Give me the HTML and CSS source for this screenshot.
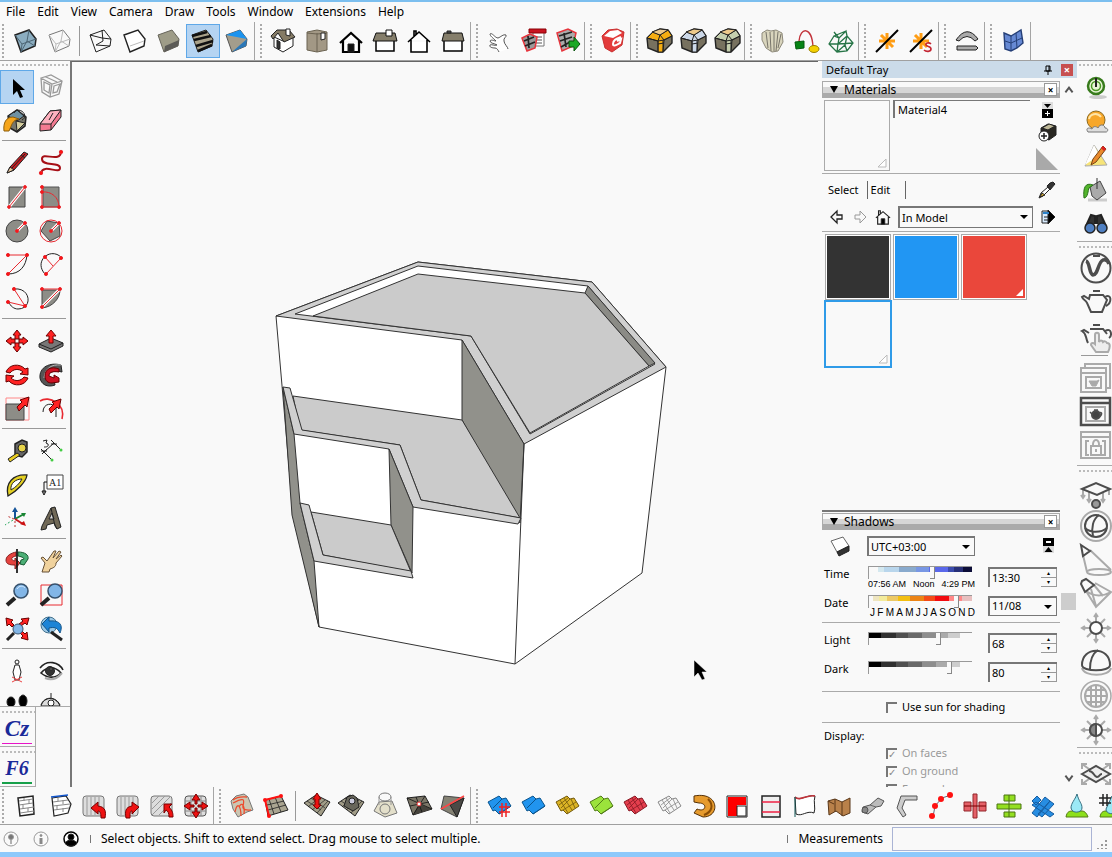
FILE: index.html
```html
<!DOCTYPE html>
<html lang="en">
<head>
<meta charset="utf-8">
<title>Model editor</title>
<link rel="stylesheet" href="styles.css">
</head>
<body>
<svg class="defs" aria-hidden="true">
  <symbol id="sheet" viewBox="0 0 34 34"><path d="M6 13l11-6 3 3 4-1 5 8-12 8-4-4-2 1z"/><path class="shade" d="M11 19l9-9M17 25l12-8"/></symbol>
  <symbol id="gridsheet" viewBox="0 0 34 34"><path d="M6 13l11-6 3 3 4-1 5 8-12 8-4-4-2 1z"/><path class="shade" d="M11 19l9-9M9 16l9-7M13 21l13-8M10 11l8 13M14 9l8 12M21 10l4 9" stroke-width=".8"/></symbol>
  <symbol id="sandmesh" viewBox="0 0 34 34"><path d="M4 14L16 6l14 7-9 14z" fill="#a29d88"/><path d="M7 12l14 9M11 9l14 10M8 18L20 8M12 21l13-10M17 24l11-12" fill="none" stroke-width=".7"/></symbol>
  <symbol id="round" viewBox="0 0 34 34"><path d="M5 14L11 8l7-3 8 1 4 6v7l-9 9-5 0-10-4z" fill="#77715f" stroke-width="1.4"/><path class="tone" d="M5 14l6-6 7 3 8-5 4 6-8 4-1 12h-5V17z"/><path d="M10 8l8-3 8 1-8 5z" fill="#ecc98b"/><path d="M5 14l11 3 6-1 8-4M16 17v11M21 16v12M18 11l-2 6M18 11l4 5M16 20l6-1" fill="none"/></symbol>
</svg>

<nav class="menu" aria-label="Main menu">
  <a href="#file">File</a><a href="#edit">Edit</a><a href="#view">View</a><a href="#camera">Camera</a><a href="#draw">Draw</a><a href="#tools">Tools</a><a href="#window">Window</a><a href="#extensions">Extensions</a><a href="#help">Help</a>
</nav>

<header class="strip top">
  <div class="group first">
    <button aria-label="X-ray"><svg viewBox="0 0 34 34"><path d="M6 11l14-5 7 9-1 7-14 6z" fill="#8badc0" stroke-width="1.5"/><path d="M6 11l7 9 14-5M13 20l-1 8M20 6l-2 11-6 11M18 17l8 5" stroke="#4d6675"/></svg></button>
    <button aria-label="Back edges"><svg viewBox="0 0 34 34" stroke="#777"><path d="M6 11l14-5 7 9-1 7-14 6z"/><path d="M6 11l7 9 14-5M13 20l-1 8M20 6l-2 11-6 11M18 17l8 5" stroke="#bbb"/></svg></button>
    <i class="sep"></i>
    <button aria-label="Wireframe"><svg viewBox="0 0 34 34"><path d="M6 11l14-5 7 9-1 7-14 6zM18 6l1 11-7 4M6 11l12 3 9 1M12 21l14 1"/></svg></button>
    <button aria-label="Hidden line"><svg viewBox="0 0 34 34"><path d="M6 11l14-5 7 9-1 7-14 6z" fill="#fff" stroke-width="1.4"/><path d="M12 22l14-5" stroke="#bbb"/></svg></button>
    <button aria-label="Shaded"><svg viewBox="0 0 34 34"><path d="M6 11l14-5 7 9-1 7-14 6z" fill="#9e9c88" stroke="#66645a"/><path d="M13 22l14-6-1 6-14 6z" fill="#5c5b57" stroke="none"/></svg></button>
    <button class="on" aria-label="Shaded with textures"><svg viewBox="0 0 34 34"><path d="M6 11l14-5 7 9-1 7-14 6z" fill="#aaa28a"/><path d="M6 12l15-4M8 16l17-4M10 22l17-5M12 27l14-6" stroke="#111" stroke-width="2.600"/></svg></button>
    <button aria-label="Monochrome"><svg viewBox="0 0 34 34"><path d="M6 11l14-5 7 9-1 7-14 6z" fill="#a39d8c" stroke="#555"/><path d="M6 11l14-5 7 9z" fill="#1b93ee" stroke="none"/><path d="M12 28l8-7 7-6-1 7z" fill="#2b78b8" stroke="none"/></svg></button>
  </div>
  <div class="group">
    <button aria-label="Iso view"><svg viewBox="0 0 34 34"><path d="M8 13v10l9 5 10-6v-9l-10 4z" fill="#fff"/><path d="M5 12l6-6h12l6 7-11 5-6-9-5 6z" fill="#857b65"/><path d="M20 5h4v7l-4-1z" fill="#fff"/><path d="M11 16v8l3 1v-7z" fill="#333"/></svg></button>
    <button aria-label="Top view"><svg viewBox="0 0 34 34"><path d="M7 8l10-2 10 2v18l-10 2-10-2z" fill="#a29885" stroke="#6b6352"/><path d="M17 9v19M7 9l10 1 10-1" stroke="#6b6352"/><path d="M21 9h4v6l-4 1z" fill="#fff"/></svg></button>
    <button aria-label="Front view"><svg viewBox="0 0 34 34"><path d="M6 19L17 9l11 10M9 17v11h16V17" fill="#fff" stroke="#000" stroke-width="2.200"/><path d="M14 20h6v8h-6z" fill="#111"/></svg></button>
    <button aria-label="Right view"><svg viewBox="0 0 34 34"><path d="M8 16h18v11H8z" fill="#fff" stroke="#000" stroke-width="1.500"/><path d="M8 9h19l2 8H5z" fill="#857e6b" stroke="#111"/><path d="M18 6h6v6h-6z" fill="#fff" stroke="#111"/></svg></button>
    <button aria-label="Back view"><svg viewBox="0 0 34 34"><path d="M6 18L17 8l11 10M9 16v12h16V16M12 12V7h2v4" stroke="#000" stroke-width="1.600" fill="#fff"/></svg></button>
    <button aria-label="Left view"><svg viewBox="0 0 34 34"><path d="M8 16h18v11H8z" fill="#fff" stroke="#000" stroke-width="1.500"/><path d="M8 9h18l2 8H6z" fill="#857e6b" stroke="#111"/><path d="M11 7h4v2h-4z" fill="#555"/></svg></button>
  </div>
  <div class="group">
    <button aria-label="Interact"><svg viewBox="0 0 34 34"><path d="M17 28c-1-2-2-4-4-4-3 0-6-1-5-3 2-1 4 1 7 0-3-2-6-1-7-4 1-2 4 0 6 0-3-3-6-5-6-7 2-2 5 4 8 4 3-1 5-4 8-3 1 2-3 3-2 6 0 3 4 6 4 8" stroke="#555" fill="#fff"/></svg></button>
    <button aria-label="Component options"><svg viewBox="0 0 34 34"><path d="M17 8h11v14H17z" fill="#fff" stroke="#777"/><path d="M13 5h17v4H13z" fill="#c81420" stroke="#8b0007"/><path d="M20 13h6M20 16h6M20 19h6" stroke="#555"/><path d="M6 14l8-4 7 3-2 11-8 3z" fill="#999" stroke="#e6343c" stroke-width="1.500"/><path d="M8 17l10-4M9 22l10-4M12 12l1 12" stroke="#222" stroke-width="1.700"/></svg></button>
    <button aria-label="Component attributes"><svg viewBox="0 0 34 34"><path d="M7 9l11-4 8 4-3 13-11 5z" fill="#aaa" stroke="#e6343c" stroke-width="1.500"/><path d="M9 12l13-4M10 17l12-4M11 23l9-5M14 9l2 14" stroke="#222" stroke-width="1.700"/><path d="M19 17h5v-4l6 7-6 7v-4h-5z" fill="#1ba925" stroke="#08540d"/></svg></button>
  </div>
  <div class="group">
    <button aria-label="Extension warehouse"><svg viewBox="0 0 34 34"><path d="M6 12l6-6 9-1 7 3-2 13-10 7-7-4z" fill="#e33b3b" stroke="#c83030"/><path d="M8 12l6-5 8-1 4 3-9 5z" fill="#fff" stroke="none"/><path d="M25 13c-5 2-8 3-8 7 0 3 3 1 7-1l1-4-4 2" stroke="#fff" stroke-width="2"/></svg></button>
  </div>
  <div class="group">
    <button class="gold" aria-label="Round corner"><svg><use href="#round"/></svg></button>
    <button class="ice" aria-label="Sharp corner"><svg><use href="#round"/></svg></button>
    <button class="sage" aria-label="Bevel"><svg><use href="#round"/></svg></button>
  </div>
  <div class="group">
    <button aria-label="Curviloft"><svg viewBox="0 0 34 34"><path d="M6 9l5-3 4 1 5-1 6 3 1 9-5 9-6 1-6-4-4-8z" fill="#d9d5bd" stroke="#8d897a"/><path d="M10 8l2 16M14 8l1 19M18 7v20M22 8l-2 19M25 10l-3 14" stroke="#77746a"/></svg></button>
    <button aria-label="Loft path"><svg viewBox="0 0 34 34"><path d="M9 17C10 3 22 2 23 23" stroke="#c2343b" stroke-width="1.400"/><path d="M5 18l9-1v7l-8 1z" fill="#078415" stroke="#045b0d"/><ellipse cx="24" cy="25" rx="5" ry="3.500" fill="#f3cf00" stroke="#987f00"/></svg></button>
    <button aria-label="Skinning"><svg viewBox="0 0 34 34" stroke="#277547"><path d="M5 20l5-8 5 2 7-7 1 5 6 7-6 8-10 1zM5 20l9 0 15-1M15 14l-1 6 9-8M10 12l12-5M14 20l-1 8M23 12l-2 9 2 6M13 28l8-7M10 8l5 6" stroke-width="1.300"/></svg></button>
  </div>
  <div class="group">
    <button aria-label="Weld edges"><svg viewBox="0 0 34 34"><path d="M9 17h16M17 9v16M11 11l12 12" stroke="#ff9d14" stroke-width="3"/><path d="M6 28L28 6" stroke="#000" stroke-width="2"/></svg></button>
    <button aria-label="Weld settings"><svg viewBox="0 0 34 34"><path d="M9 17h16M17 9v16M11 11l12 12" stroke="#ff9d14" stroke-width="3"/><path d="M6 28L28 6" stroke="#000" stroke-width="2"/><path d="M27 20c-2-2-6-1-5 1s5 1 5 4-5 3-7 1" stroke="#c42532" stroke-width="1.600"/></svg></button>
  </div>
  <div class="group">
    <button aria-label="Shape bender"><svg viewBox="0 0 34 34"><path d="M6 16Q17 0 28 15l-3 2Q17 8 9 17z" fill="#aaa"/><path d="M7 22h19l2 2-2 2H7z" fill="#aaa"/></svg></button>
  </div>
  <div class="group">
    <button aria-label="Unwrap"><svg viewBox="0 0 34 34"><path d="M8 9l7 3 10-6 2 13-6 5-6 3-6-2z" fill="#6689d3" stroke="#253f77" stroke-width="1.400"/><path d="M15 12v15M9 17l6 2 11-5M20 9l1 15" stroke="#253f77"/></svg></button>
  </div>
</header>

<main class="work">
  <aside class="left">
    <div class="dots"></div>
    <div class="palette">
      <div class="pair">
        <button class="on" aria-label="Select"><svg viewBox="0 0 34 34"><path d="M13 9v16l4-4 3 7 3-1-3-7h5z" fill="#000" stroke="none"/></svg></button>
        <button aria-label="Make component"><svg viewBox="0 0 34 34" stroke="#999"><path d="M7 8l10-3 11 6-3 13-9 3-8-5zM7 8l11 6 10-3M18 14l-2 13M10 12l6 3-1 8-5-3zM20 16l6-2-3 8-4 1zM12 7l11 5" stroke-width="1.300"/></svg></button>
        <button aria-label="Paint bucket"><svg viewBox="0 0 34 34"><path d="M8 12l9-6 9 7-1 9-8 6-7-4z" fill="#77776c" stroke-width="1.500"/><path d="M8 12l9-6 7 6-7 5z" fill="#6e91a2"/><path d="M16 17l9 2-8 8z" fill="#d4cd9e"/><path d="M4 27c-1-8 2-14 9-14l6 2c-7 1-7 6-10 12z" fill="#f5a51b" stroke="#8c5d0b"/><path d="M14 9c5-8 16 3 8 7"/></svg></button>
        <button aria-label="Eraser"><svg viewBox="0 0 34 34"><path d="M6 20l10-13 11-1v7L17 26 6 27z" fill="#f47a91"/><path d="M6 20l10-13 11-1-10 14z" fill="#ffb1bf"/><path d="M17 20v6M15 16l4-7"/></svg></button>
      </div><i class="rule"></i>
      <div class="pair">
        <button aria-label="Line"><svg viewBox="0 0 34 34"><path d="M7 27l3-6L24 6l4 2-14 16z" fill="#c51e23"/><path d="M7 27l3-6 4 3z" fill="#eac79a"/><path d="M21 9l4 3M12 22L25 8" /></svg></button>
        <button class="red" aria-label="Freehand"><svg viewBox="0 0 34 34"><path d="M7 27c2-10 19 2 19-5S8 21 8 13s19 5 19-8" stroke="#a60f16" stroke-width="2"/><circle cx="7" cy="27" r="1.700"/><circle cx="27" cy="6" r="1.700"/></svg></button>
        <button class="red" aria-label="Rectangle"><svg viewBox="0 0 34 34"><path d="M9 7h16v20H9z" fill="#8d8d87" stroke="#444"/><path d="M9 27L25 7" stroke="#fff" stroke-width="3"/><path d="M9 27L25 7"/><circle cx="9" cy="27" r="1.400"/><circle cx="25" cy="7" r="1.400"/></svg></button>
        <button class="red" aria-label="Rotated rectangle"><svg viewBox="0 0 34 34"><path d="M9 7h16v20H9z" fill="#8d8d87" stroke="#555"/><path d="M8 7v20h18M8 12c9-1 17 5 17 15"/><circle cx="8" cy="7" r="1.500"/><circle cx="8" cy="12" r="1.500"/><circle cx="8" cy="27" r="1.500"/><circle cx="25" cy="27" r="1.500"/></svg></button>
        <button class="red" aria-label="Circle"><svg viewBox="0 0 34 34"><circle cx="17" cy="17" r="11" class="grey"/><path d="M17 17l8-8" stroke="#fff" stroke-width="3"/><path d="M17 17l8-8"/><circle cx="17" cy="17" r="1.500"/><circle cx="25" cy="9" r="1.500"/></svg></button>
        <button class="red" aria-label="Polygon"><svg viewBox="0 0 34 34"><path d="M13 7l12 2 1 13-10 5-9-10z" class="grey"/><circle cx="17" cy="17" r="11" class="ring"/><path d="M17 17l8-8" stroke="#fff" stroke-width="3"/><path d="M17 17l8-8"/><circle cx="17" cy="17" r="1.500"/><circle cx="25" cy="9" r="1.500"/></svg></button>
        <button class="red" aria-label="Arc"><svg viewBox="0 0 34 34"><path d="M8 26c12 0 18-8 19-19" stroke="#222"/><path d="M8 26L27 7H8"/><circle cx="8" cy="7" r="1.600"/><circle cx="27" cy="7" r="1.600"/><circle cx="8" cy="26" r="1.600"/></svg></button>
        <button class="red" aria-label="Two point arc"><svg viewBox="0 0 34 34"><path d="M11 26C-1 13 17-2 28 10" stroke="#222"/><path d="M12 26l15-16M11 9l8 9"/><circle cx="11" cy="9" r="1.600"/><circle cx="27" cy="10" r="1.600"/><circle cx="12" cy="26" r="1.600"/></svg></button>
        <button class="red" aria-label="Three point arc"><svg viewBox="0 0 34 34"><path d="M14 7c17-2 19 20 4 20-4 0-8-3-9-7" stroke="#222"/><path d="M14 7l11 17-17-4"/><circle cx="14" cy="7" r="1.600"/><circle cx="8" cy="20" r="1.600"/><circle cx="25" cy="24" r="1.600"/></svg></button>
        <button class="red" aria-label="Pie"><svg viewBox="0 0 34 34"><path d="M8 8h18c0 8-7 17-18 18z" class="grey"/><path d="M8 25L26 7" stroke="#fff" stroke-width="3"/><path d="M8 25L26 7H8"/><circle cx="8" cy="7" r="1.500"/><circle cx="8" cy="25" r="1.500"/><circle cx="26" cy="7" r="1.500"/></svg></button>
      </div><i class="rule"></i>
      <div class="pair">
        <button aria-label="Move"><svg viewBox="0 0 34 34"><path d="M17 6l4 5h-2v4h-4v-4h-2zM17 28l4-5h-2v-4h-4v4h-2zM6 17l5-4v2h4v4h-4v2zM28 17l-5-4v2h-4v4h4v2z" fill="#f22" stroke="#600"/></svg></button>
        <button aria-label="Push pull"><svg viewBox="0 0 34 34"><path d="M5 20l12-6 12 5v3l-12 6-12-5z" fill="#777"/><path d="M5 20l12 5 12-6" /><path d="M17 6l5 6h-3v7h-4v-7h-3z" fill="#f22" stroke="#700"/></svg></button>
        <button aria-label="Rotate"><svg viewBox="0 0 34 34"><path d="M6 14C9 6 20 5 25 11l3-1v7l-8-1 3-2c-4-4-10-3-13 1zM28 20c-3 8-14 9-19 3l-3 1v-7l8 1-3 2c4 4 10 3 13-1z" fill="#f22" stroke="#600"/></svg></button>
        <button aria-label="Follow me"><svg viewBox="0 0 34 34"><path d="M6 20C5 9 16 4 27 7l1 7c-8-2-14 0-14 5 0 2 3 3 6 3l1 5c-8 3-14-1-15-7z" fill="#555"/><path d="M27 7c-9-1-16 3-17 13" stroke="#bbb"/><path d="M11 18c0-7 6-10 14-7v3c-6-1-10 0-10 4l5 2v-3l5 3v4l-7 1c-4 0-7-2-7-7z" fill="#c12" stroke="#600"/></svg></button>
        <button class="red" aria-label="Scale"><svg viewBox="0 0 34 34"><path d="M6 6h23v22H6z" class="thin"/><path d="M6 12h18v16H6z" class="grey"/><path d="M17 15l5-5-2-2 9-3-2 10-2-2-6 6z" fill="#f22" stroke="#600"/></svg></button>
        <button class="red" aria-label="Offset"><svg viewBox="0 0 34 34"><path d="M6 9c9-6 26 3 22 18" stroke-width="1.600"/><path d="M9 20c0-9 10-10 13-4v9" stroke="#222"/><path d="M15 17l5-5-2-2 9-3-2 10-2-2-6 6z" fill="#f22" stroke="#600"/></svg></button>
      </div><i class="rule"></i>
      <div class="pair">
        <button aria-label="Tape measure"><svg viewBox="0 0 34 34"><path d="M15 10l7-4 5 2v10l-5 5-7-2z" fill="#666" stroke-width="1.500"/><circle cx="22" cy="14" r="4" fill="#e7d44a"/><path d="M17 19L8 25l2 3 10-7z" fill="#e9cd22"/></svg></button>
        <button aria-label="Dimension"><svg viewBox="0 0 34 34"><path d="M10 18l10-9M7 15l11 11M17 6l10 10M7 17h6M8 20l5-5M17 10h6M18 7l5 5"/><path d="M9 7l4-1-1 3 2 1c1 3-2 3-4 3"/><circle cx="27" cy="16" r="1.500" fill="#4c4" stroke="none"/><circle cx="18" cy="26" r="1.500" fill="#4c4" stroke="none"/></svg></button>
        <button aria-label="Protractor"><svg viewBox="0 0 34 34"><path d="M8 28C5 15 13 6 27 7c-1 7-10 16-19 21z" fill="#e4d022" stroke-width="1.300"/><path d="M11 22c-1-7 5-11 11-11-2 4-6 8-11 11z" fill="#fff"/></svg></button>
        <button aria-label="Text"><svg viewBox="0 0 34 34"><path d="M13 7h16v14H13z" fill="#fff" stroke="#444"/><path d="M13 14h-3v11M8 23h4l-2 4z" fill="none" stroke="#111"/><text x="15" y="18">A1</text></svg></button>
        <button aria-label="Axes"><svg viewBox="0 0 34 34"><path d="M15 17V7" stroke="#14549a" stroke-width="2"/><path d="M12 10l3-5 3 5z" fill="#14549a" stroke="none"/><path d="M15 17l9-5" stroke="#198533" stroke-width="2"/><path d="M15 17l8 5" stroke="#c8171c" stroke-width="2"/><path d="M13 18l-8 5" stroke="#25a65a" stroke-dasharray="2"/><path d="M14 17l-7-3M15 19v8" stroke="#b33" stroke-dasharray="2"/><path d="M20 22l6 2-2-5z" fill="#c11" stroke="none"/><path d="M21 11h5l-2 4z" fill="#198533" stroke="none"/></svg></button>
        <button aria-label="3D text"><svg viewBox="0 0 34 34"><path d="M8 24l9-18 4-1 6 20-4 2-3-6-7 2-1 4-5 1z" fill="#716957"/><path d="M15 17l3-6 2 6z" fill="#ddd"/><path d="M17 6l4 18 2 3"/></svg></button>
      </div><i class="rule"></i>
      <div class="pair">
        <button aria-label="Orbit"><svg viewBox="0 0 34 34"><path d="M6 16c0-6 10-8 10-8v4c-5 1-6 4-1 5v-3l5 5-5 6v-4C9 21 6 20 6 16z" fill="#e6433e" stroke="#822"/><path d="M18 8c7 0 11 3 10 7l-4 6-4-1 1-4 3-1c0-2-6-3-6-3z" fill="#4caf76" stroke="#175b32"/><path d="M17 5v24" stroke="#111" stroke-width="1.700"/></svg></button>
        <button aria-label="Pan"><svg viewBox="0 0 34 34"><path d="M8 28l3-9-4-5 2-1 4 4L20 7l2 0-3 7 6-7 2 1-5 7 5-4 1 1-6 7c0 4-3 5-6 6l-1 3z" fill="#f0d29d" stroke="#665137"/></svg></button>
        <button aria-label="Zoom"><svg viewBox="0 0 34 34"><path d="M7 27l8-7" stroke-width="4"/><circle cx="21" cy="13" r="7" fill="#82b6e7" stroke="#37526d" stroke-width="1.600"/><path d="M17 11c2-4 7-3 8-1" stroke="#d6ebfd"/></svg></button>
        <button class="red" aria-label="Zoom window"><svg viewBox="0 0 34 34"><path d="M7 7h21v20H7z"/><path d="M7 27l8-7" stroke="#222" stroke-width="4"/><circle cx="21" cy="13" r="7" class="lens"/></svg></button>
        <button aria-label="Zoom extents"><svg viewBox="0 0 34 34"><path d="M6 6l7 2-2 2 3 3-2 2-3-3-2 2zM29 6l-2 7-2-2-4 3-2-2 4-3-2-2zM28 28l-7-2 2-2-4-4 2-2 4 4 2-2z" fill="#f22" stroke="#600"/><path d="M7 28l7-7" stroke-width="3"/><circle cx="18" cy="17" r="5" fill="#82b6e7" stroke="#37526d"/></svg></button>
        <button aria-label="Previous view"><svg viewBox="0 0 34 34"><circle cx="15" cy="13" r="8" fill="#9bc8e5" stroke="#44718d"/><path d="M8 12l7-7v4c12-1 14 5 11 12-3-6-6-6-11-5v4z" fill="#1d84d6" stroke="#135388"/><path d="M17 20l11 8" stroke-width="3"/></svg></button>
      </div><i class="rule"></i>
      <div class="pair">
        <button aria-label="Position camera"><svg viewBox="0 0 34 34"><circle cx="17" cy="8" r="2"/><path d="M15 11h4l2 7-2 8h-4l-2-8z" fill="#fff"/><path d="M12 28l10-5M12 23l10 5" stroke="#e44"/></svg></button>
        <button aria-label="Look around"><svg viewBox="0 0 34 34"><path d="M6 14c7-9 19-6 23 2M7 19c6-7 14-7 20 0-6 6-14 5-20 0z" stroke-width="1.600"/><circle cx="16" cy="17" r="4.500" fill="#333"/><circle cx="17" cy="15" r="1" fill="#fff"/><path d="M11 24c7 3 12 1 17-5" stroke="#aaa" stroke-width="2"/></svg></button>
        <button aria-label="Walk"><svg viewBox="0 0 34 34"><ellipse cx="11" cy="14" rx="4" ry="5" fill="#000"/><ellipse cx="23" cy="13" rx="4" ry="6" fill="#000"/></svg></button>
        <button aria-label="Section plane"><svg viewBox="0 0 34 34"><path d="M7 18c3-10 15-10 19 0z" fill="#ddd"/><path d="M17 5v5M7 17c3-9 15-9 19 0"/><circle cx="17" cy="15" r="3" fill="#fff"/></svg></button>
      </div>
    </div>
    <div class="plugin"><div class="dots"></div><button class="script pink" aria-label="Curvizard">Cz</button></div>
    <div class="plugin"><div class="dots"></div><button class="script green" aria-label="Fredo6">F6</button></div>
  </aside>

  <section class="view" aria-label="Model view">
    <svg viewBox="72 62 746 724" preserveAspectRatio="xMinYMin meet" stroke="#333" stroke-linejoin="round">
      <path fill="#fff" d="M276 316L418 262 592 282 666 367 642 573 515 664 319 627 293 513z"/>
      <path fill="#d0d0d0" d="M276 316L418 262 592 282 666 367 524 444 462 340z"/>
      <path fill="#fff" d="M295 314L418 266 588 286 655 364 530 434 471 336z"/>
      <path fill="#8b8b86" d="M585 293L588 286 655 363 649 366z"/>
      <path fill="#cbcbcb" d="M313 316L418 274 585 293 649 366 530 433 471 336z"/>
      <path fill="#91918b" d="M462 340L524 444 520 523 462 420z"/>
      <path fill="#cbcbcb" d="M293 396L462 420 520 518 421 500 400 445 300 430z"/>
      <path fill="#91918b" d="M283 387L294 434 300 503 314 561 319 627 292 515z"/>
      <path fill="#d0d0d0" d="M283 387L290 388 302 430 400 445 421 500 521 518 518 524 413 507 389 449 294 434z"/>
      <path fill="#91918b" d="M389 449L413 507 412 573 391 525z"/>
      <path fill="#cbcbcb" d="M311 512L391 525 411 572 323 555z"/>
      <path fill="#d0d0d0" d="M300 503L309 505 323 555 411 571 413 578 314 561z"/>
      <path d="M524 444L515 664"/>
      <path fill="#000" stroke="#fff" stroke-width=".5" d="M694 660v17l4-4 4 7 3-1-3-7h5z"/>
    </svg>
  </section>

  <aside class="tray">
    <h1>Default Tray <button class="pin" aria-label="Pin"><svg viewBox="0 0 10 10"><path d="M3 1h4v5H3zM1 6h8M5 6v4M6 1v5" stroke="#000"/></svg></button><button class="shut" aria-label="Close tray">×</button></h1>
    <div class="traybody">
      <div class="panels">
        <section class="materials">
          <h2><span class="tri"></span>Materials<button aria-label="Close materials">×</button></h2>
          <div class="info">
            <div class="preview"><svg class="corner" viewBox="0 0 10 10"><path d="M9 1v8H1z" fill="#fff" stroke="#bbb"/></svg></div>
            <input class="name" aria-label="Material name" value="Material4">
            <div class="tools">
              <button aria-label="Show secondary pane"><svg viewBox="0 0 12 16"><path d="M1 0h11v7H1z" fill="#ddd" stroke="none"/><path d="M3 2h7L6.500 6zM1 7h11v9H1z" fill="#000" stroke="none"/><path d="M4 11.500h5M6.500 9v5" stroke="#fff"/></svg></button>
              <button aria-label="Create material"><svg viewBox="0 0 20 20"><path d="M4 6l7-4 8 2v9l-7 5-8-3z" fill="#292722"/><path d="M5 6l7-4 6 2-7 4z" fill="#bdb797"/><circle cx="7" cy="14" r="5" fill="#fff"/><path d="M4 14h6M7 11v6" stroke-width="1.500"/></svg></button>
              <svg class="wedge" viewBox="0 0 22 22"><path d="M0 0v22h22z" fill="#a9a9a9" stroke="none"/></svg>
            </div>
          </div>
          <div class="tabs">
            <a href="#select" class="active">Select</a><a href="#edit-tab">Edit</a>
            <button aria-label="Sample paint"><svg viewBox="0 0 18 18"><path d="M1 17l2-5 7-6 2 2-7 7z" fill="#fff"/><path d="M2 16l2-4 3 2z" fill="#e5b52f"/><path d="M9 5l3 4 5-6-2-2-3 1z" fill="#333"/></svg></button>
          </div>
          <div class="pick">
            <button aria-label="Back"><svg viewBox="0 0 16 16"><path d="M2 8l6-6v4h5v4H8v4z" stroke-width="1.300"/></svg></button>
            <button aria-label="Forward"><svg viewBox="0 0 16 16"><path d="M14 8L8 2v4H3v4h5v4z" stroke="#999"/></svg></button>
            <button aria-label="In model"><svg viewBox="0 0 18 18"><path d="M1 10l8-7 8 7M3 9v8h12V9M4 7V2h2v3" stroke-width="1.300"/><path d="M7 11h4v6H7z" fill="#000"/></svg></button>
            <span class="drop"><select aria-label="Library"><option>In Model</option></select></span>
            <button aria-label="Details"><svg viewBox="0 0 16 16"><path d="M2 2h7v12H2z" fill="#d9ecff"/><path d="M8 1l7 7-7 7z" fill="#000"/><path d="M3 4h6" stroke="#2c82c9" stroke-width="2"/><path d="M4 8h4M4 11h4"/></svg></button>
          </div>
          <div class="swatches">
            <button class="coal" aria-label="Material1"></button><button class="blue" aria-label="Material2"></button><button class="rouge" aria-label="Material3"><svg class="corner" viewBox="0 0 10 10"><path d="M9 2v7H2z" fill="#fff" stroke="none"/></svg></button><button class="blank" aria-label="Material4"><svg class="corner" viewBox="0 0 10 10"><path d="M9 1v8H1z" fill="#fff" stroke="#bbb"/></svg></button>
          </div>
        </section>
        <section class="shadows">
          <h2><span class="tri"></span>Shadows<button aria-label="Close shadows">×</button></h2>
          <div class="zone">
            <button aria-label="Show shadows"><svg viewBox="0 0 22 22"><path d="M2 6l12-4 6 9-12 6z" fill="#fff" stroke="#666"/><path d="M8 17l12-6v5l-10 5z" fill="#333"/></svg></button>
            <span class="drop"><select aria-label="Time zone"><option>UTC+03:00</option></select></span>
            <button class="fold" aria-label="Hide details"><svg viewBox="0 0 12 16"><path d="M1 0h11v8H1z" fill="#000" stroke="none"/><path d="M4 3h5v2H4z" fill="#fff" stroke="none"/><path d="M1 8h11v7H1z" fill="#ddd" stroke="none"/><path d="M6.500 9l4 5h-8z" fill="#000" stroke="none"/></svg></button>
          </div>
          <div class="row"><label for="time">Time</label><div class="slide"><input id="time" class="hours" type="range" min="0" max="100" value="62"><div class="scale"><span>07:56 AM</span><span>Noon</span><span>4:29 PM</span></div></div><div class="spin"><input aria-label="Time value" value="13:30"><span><button aria-label="Later">▴</button><button aria-label="Earlier">▾</button></span></div></div>
          <div class="row"><label for="date">Date</label><div class="slide"><input id="date" class="months" type="range" min="0" max="100" value="87"><div class="scale"><span>J</span><span>F</span><span>M</span><span>A</span><span>M</span><span>J</span><span>J</span><span>A</span><span>S</span><span>O</span><span>N</span><span>D</span></div></div><span class="drop"><select aria-label="Date value"><option>11/08</option></select></span></div>
          <div class="block">
          <div class="row"><label for="light">Light</label><div class="slide"><input id="light" class="greys" type="range" min="0" max="100" value="68"></div><div class="spin"><input aria-label="Light value" value="68"><span><button aria-label="More light">▴</button><button aria-label="Less light">▾</button></span></div></div>
          <div class="row"><label for="dark">Dark</label><div class="slide"><input id="dark" class="greys" type="range" min="0" max="100" value="80"></div><div class="spin"><input aria-label="Dark value" value="80"><span><button aria-label="More dark">▴</button><button aria-label="Less dark">▾</button></span></div></div>
          </div>
          <label class="check sun"><input type="checkbox">Use sun for shading</label>
          <p>Display:</p>
          <label class="check"><input type="checkbox" checked disabled>On faces</label>
          <label class="check"><input type="checkbox" checked disabled>On ground</label>
          <label class="check"><input type="checkbox" disabled>From edges</label>
        </section>
      </div>
      <div class="scroll"><svg viewBox="0 0 10 10"><path d="M2 7l3-4 3 4" stroke="#555" stroke-width="1.600"/></svg><i></i><svg viewBox="0 0 10 10"><path d="M2 3l3 4 3-4" stroke="#555" stroke-width="1.600"/></svg></div>
    </div>
  </aside>

  <aside class="right">
    <div class="dots"></div>
    <div class="stack">
      <button aria-label="Enable"><svg viewBox="0 0 34 34"><ellipse cx="19" cy="26" rx="9" ry="2" fill="#ccc" stroke="none"/><circle cx="17" cy="15" r="8" fill="#e8f5d6" stroke="#387b1d" stroke-width="2.500"/><circle cx="17" cy="15" r="4.500" stroke="#4b9925" stroke-width="1.500"/><path d="M17 7v9" stroke="#222" stroke-width="2"/></svg></button>
      <button aria-label="Sky"><svg viewBox="0 0 34 34"><circle cx="17" cy="15" r="9" fill="#f7a72a" stroke="#8d6b20"/><path d="M10 14c1-5 8-7 12-2" stroke="#ffe5a6" stroke-width="2"/><path d="M9 27c-3-4 1-5 4-3 1-3 4-3 6-1 2-5 7-3 7 0 4 0 3 4 1 4z" fill="#ddd" stroke="#777"/></svg></button>
      <button aria-label="Edit scene"><svg viewBox="0 0 34 34"><path d="M6 27l9-21 13 20z" fill="#f7e478" stroke="#aaa"/><path d="M6 26l9-20 5 10z" fill="#fff" stroke="none"/><path d="M12 26l2-6L24 7l3 3-10 13z" fill="#e98a2c" stroke="#774315"/><path d="M23 8l3 3" stroke="#d22" stroke-width="3"/></svg></button>
      <button aria-label="Paint"><svg viewBox="0 0 34 34"><path d="M9 27h19" stroke="#ccc" stroke-width="3"/><path d="M11 14l10-6 6 12-9 7-5-4z" fill="#aaa" stroke="#444"/><path d="M18 5v11" stroke="#333"/><path d="M14 12c-8-3-10 3-9 13 4 0 4-8 5-10z" fill="#52b52b" stroke="#2a711a"/></svg></button>
      <button aria-label="Find"><svg viewBox="0 0 34 34"><path d="M7 19l5-11 4 1v8M27 19L22 8l-4 1v8" fill="#333" stroke="#222" stroke-width="2"/><circle cx="11" cy="21" r="5" fill="#4f7fc1" stroke="#222" stroke-width="1.500"/><circle cx="23" cy="21" r="5" fill="#4f7fc1" stroke="#222" stroke-width="1.500"/></svg></button>
    </div>
    <i class="wide"></i><div class="dots"></div>
    <div class="stack mono tall">
      <button aria-label="V-Ray"><svg viewBox="0 0 34 34"><circle cx="17" cy="17" r="14.500"/><path d="M7 10c4 1 3 13 7 14 5 0 5-13 10-15 3-1 5 1 6 4" stroke-width="3.500"/><path d="M14 5h7"/></svg></button>
      <button aria-label="Render"><svg viewBox="0 0 34 34"><path d="M11 10h13l4 5-5 12H12L8 18c-1-3-4-3-5-6l2-1 5 3zM14 6h7M26 12c7-4 7 6 1 9"/></svg></button>
      <button aria-label="Interactive render"><svg viewBox="0 0 34 34"><path d="M9 24c-3-6-1-9-6-12l2-1 5 3M11 10h13l4 5M14 6h7M26 12c7-4 7 5 4 7"/><path class="pale" d="M16 25V16c0-3 4-3 4 0v7c1-2 3-2 4 0 1-1 3-1 4 1 4 0 3 5 1 9H17l-5-7c0-3 3-2 4-1z" fill="#eee"/></svg></button>
      <i class="rule"></i>
      <button class="soft" aria-label="Batch render"><svg viewBox="0 0 34 34"><path d="M6 6V3h25v24h-3M2 7h25v24H2zM2 12h25M7 16h15v11H7z"/><path d="M10 20h8l2-1-3 6h-4z" fill="#aaa" stroke-width="1"/></svg></button>
      <button aria-label="Frame buffer"><svg viewBox="0 0 34 34"><path d="M2 3h29v27H2zM2 8h29" stroke-width="2.500"/><path class="pale" d="M7 12h19v14H7z"/><ellipse cx="17" cy="20" rx="4" ry="4" fill="#444"/><path d="M11 17l3 3M15 15h4M20 18c4-2 3 3 0 4" stroke-width="1.500"/></svg></button>
      <button class="soft" aria-label="Lock camera"><svg viewBox="0 0 34 34"><path d="M2 3h29v26H2zM2 8h29M10 12H7v14h3M23 12h3v14h-3M12 17h10v9H12zM14 17c-1-8 7-8 6 0M17 20v3"/></svg></button>
    </div>
    <i class="wide"></i><div class="dots"></div>
    <div class="stack mono">
      <button aria-label="Rectangle light"><svg viewBox="0 0 34 34"><path class="pale" d="M4 13v8M10 17v8M24 18v8M30 14v6M2 20l2 3 2-3M8 24l2 3 2-3M22 24l2 3 2-3"/><path d="M3 14l14-6 14 6-13 6z"/><circle cx="17" cy="29" r="4" fill="#999"/></svg></button>
      <button aria-label="Sphere light"><svg viewBox="0 0 34 34"><circle class="pale" cx="17" cy="17" r="15"/><circle cx="17" cy="17" r="11"/><path d="M20 6c-6 4-8 13-6 21M6 19c5 5 16 5 22 0"/></svg></button>
      <button aria-label="Spot light"><svg viewBox="0 0 34 34"><path class="pale" d="M4 12l4 17M11 7l21 20"/><ellipse class="pale" cx="20" cy="29" rx="12" ry="3"/><path d="M2 2l9 6-7 5z"/></svg></button>
      <button aria-label="IES light"><svg viewBox="0 0 34 34"><path class="pale" d="M7 14l10 16L32 15 16 6M7 14c7 5 16 6 25 1M12 12l5 17M15 8l9 11"/><path d="M3 4l4-2 8 6-9 7-4-8z"/></svg></button>
      <button aria-label="Omni light"><svg viewBox="0 0 34 34"><path class="pale" d="M17 4v26M4 17h26M8 8l18 18M26 8L8 26M15 6l2-3 2 3M15 28l2 3 2-3M6 15l-3 2 3 2M28 15l3 2-3 2"/><circle cx="17" cy="17" r="6" fill="#fff"/></svg></button>
      <button aria-label="Dome light"><svg viewBox="0 0 34 34"><path class="pale" d="M3 23c2 9 27 9 29 0"/><path d="M3 20c0-19 28-19 28 0 0 7-28 7-28 0zM19 5c-6 4-8 12-8 19" fill="none"/></svg></button>
      <button class="soft" aria-label="Mesh light"><svg viewBox="0 0 34 34"><circle cx="17" cy="17" r="15" stroke-width="1.500"/><circle cx="17" cy="17" r="11"/><path d="M17 6v22M6 17h22M8 11h18M8 23h18M12 7v20M22 7v20"/></svg></button>
      <button aria-label="Sun light"><svg viewBox="0 0 34 34"><path class="pale" d="M17 4v26M4 17h26M8 8l18 18M26 8L8 26M15 6l2-3 2 3M15 28l2 3 2-3M6 15l-3 2 3 2M28 15l3 2-3 2"/><circle cx="17" cy="17" r="6" fill="#fff"/><path d="M17 11v12c-8-1-8-11 0-12" fill="#888"/></svg></button>
    </div>
    <i class="wide"></i><div class="dots"></div>
    <div class="stack mono"><button aria-label="Infinite plane"><svg viewBox="0 0 34 34"><path class="pale" d="M3 7l28 20M31 7L3 27M3 12V7h5M26 7h5v5M3 22v5h5M26 27h5v-5"/><path d="M3 17l14-8 14 8-14 8z" fill="#eee"/><path d="M10 14c5 0 4 5 8 6 3 0 2-3 5-3" /></svg></button></div>
  </aside>
</main>

<div class="strip bottom">
  <div class="group first">
    <button aria-label="Texture quad"><svg viewBox="0 0 34 34"><path d="M9 9l15-2 1 18-14 2z" fill="#fff" stroke-width="1.500"/><path d="M10 12l14-2M10 16l14-2M11 20l14-2M11 24l14-2M15 9v3M20 11v4M14 16v4M19 19v4" stroke="#888"/></svg></button>
    <button aria-label="Texture edge"><svg viewBox="0 0 34 34"><path d="M9 9l14-2 5 8-3 9-14 3z" fill="#fff" stroke-width="1.200"/><path d="M10 13l15-2M10 17l17-2M11 21l15-2M15 9v3M20 11v4M14 17v4M20 19v4" stroke="#888"/><path d="M8 8l17-2" stroke="#15c" stroke-width="1.500"/></svg></button>
    <button aria-label="Rotate texture left"><svg viewBox="0 0 34 34"><rect x="6" y="7" width="21" height="20" rx="3" fill="#ddd" stroke="#777"/><path d="M10 8v18M14 8v18M18 8v18M22 8v18" stroke="#999"/><path d="M14 19l7-6v4c8 1 8 6 7 12h-4c0-5-1-7-3-7v3z" fill="#e11" stroke="#700"/></svg></button>
    <button aria-label="Rotate texture right"><svg viewBox="0 0 34 34"><rect x="6" y="7" width="21" height="20" rx="3" fill="#ddd" stroke="#777"/><path d="M10 8v18M14 8v18M18 8v18M22 8v18" stroke="#999"/><path d="M28 18l-7-5v4c-7 1-7 6-6 12h4c0-5 0-7 2-7v3z" fill="#e11" stroke="#700"/></svg></button>
    <button aria-label="Texture arrow"><svg viewBox="0 0 34 34"><rect x="6" y="7" width="21" height="20" rx="3" fill="#ddd" stroke="#777"/><path d="M7 14l7-7M7 20L20 7M7 26L26 7M14 26l12-12" stroke="#999"/><path d="M19 15h8l-3 3c4 4 4 7 4 10h-4c0-4-1-6-3-7l-2 3z" fill="#e11" stroke="#700"/></svg></button>
    <button aria-label="Scale texture"><svg viewBox="0 0 34 34"><rect x="6" y="7" width="21" height="20" rx="3" fill="#ddd" stroke="#555"/><path d="M6 12h21M6 22h21M12 7v20M22 7v20" stroke="#888"/><path d="M17 5l4 6h-3v4h-2v-4h-3zM17 29l4-6h-3v-4h-2v4h-3zM5 17l6-4v3h4v2h-4v3zM29 17l-6-4v3h-4v2h4v3z" fill="#e11" stroke="#700"/></svg></button>
  </div>
  <div class="group">
    <button aria-label="From contours"><svg viewBox="0 0 34 34"><path d="M6 12l5-5 8-2 4 3 5 13-6 2-9 5-5-8z" fill="#ccc6b2" stroke="#777"/><path d="M8 14c13-7 11-2 10 3s6 4 8 4M10 23c2-11 6-6 6 4M14 18c3-6 6-1 5 7M8 11c5-4 9-3 14-3" stroke="#ed4b2d" stroke-width="1.300"/></svg></button>
    <button aria-label="From scratch"><svg viewBox="0 0 34 34"><path d="M6 11l16-4 7 14-20 6z" fill="#aaa591"/><path d="M10 10l5 15M16 8l6 15M8 16l17-4M9 21l18-5" stroke-width=".8"/><path d="M10 27L6 11l16-4" stroke="#f11" stroke-width="2"/><circle cx="6" cy="11" r="2" fill="#f11" stroke="none"/><circle cx="22" cy="7" r="2" fill="#f11" stroke="none"/><circle cx="10" cy="27" r="2" fill="#f11" stroke="none"/></svg></button>
    <i class="sep"></i>
    <button aria-label="Smoove"><svg viewBox="0 0 34 34"><use href="#sandmesh"/><path d="M17 4l4 6h-2v6h2l-4 4-4-4h2v-6h-2z" fill="#e11" stroke="#700"/></svg></button>
    <button aria-label="Stamp"><svg viewBox="0 0 34 34"><use href="#sandmesh"/><path d="M10 17l3-9 6-2 4 3 2 9-6 4z" fill="#68665b"/><circle cx="18" cy="12" r="3" fill="#ccd"/></svg></button>
    <button aria-label="Drape"><svg viewBox="0 0 34 34"><path d="M6 22l5-9 13-1 5 12-12 4z" fill="#e3dfca" stroke="#777"/><circle cx="17" cy="20" r="5" stroke="#777"/><ellipse cx="17" cy="8" rx="6" ry="4" stroke="#777"/><path d="M11 8v8M23 8v8" stroke="#999"/></svg></button>
    <button aria-label="Add detail"><svg viewBox="0 0 34 34"><path d="M5 9l18-2 7 13-19 6z" fill="#7b7667" stroke="#222"/><path d="M17 15l13 5-19 6z" fill="#45423b" stroke="none"/><path d="M5 9l25 11M11 26L23 7M8 17l19-4M14 8l6 15" stroke="#111" stroke-width=".8"/><circle cx="17" cy="15" r="2" fill="#fff" stroke="#e33"/></svg></button>
    <button aria-label="Flip edge"><svg viewBox="0 0 34 34"><path d="M8 7l20 2-7 19L5 20z" fill="#858274" stroke="#444"/><path d="M28 9l-7 19-7-12z" fill="#4b4a46"/><path d="M5 20L28 7" stroke="#f44" stroke-width="1.500"/></svg></button>
  </div>
  <div class="group tail">
    <button class="azure" aria-label="Subdivide count"><svg viewBox="0 0 34 34"><use href="#sheet"/><path d="M20 14v14M24 14v14M17 18h11M17 23h11" stroke="#e22" stroke-width="1.500"/></svg></button>
    <button class="azure" aria-label="Crease"><svg><use href="#sheet"/></svg></button>
    <button class="mustard" aria-label="Smooth"><svg><use href="#gridsheet"/></svg></button>
    <button class="lime" aria-label="Refine"><svg><use href="#sheet"/></svg></button>
    <button class="crimson" aria-label="Quad"><svg><use href="#gridsheet"/></svg></button>
    <button class="chalk" aria-label="Grid"><svg><use href="#gridsheet"/></svg></button>
    <button aria-label="Bend"><svg viewBox="0 0 34 34"><path d="M8 7c25-5 27 21 9 21l-9-4 3-4c9 4 11-6 2-6l-5-1z" fill="#e69b2e" stroke="#553108"/><path d="M22 10c6 6 4 13-4 16" stroke="#8a4d05" stroke-width="2"/></svg></button>
    <button aria-label="Corner"><svg viewBox="0 0 34 34"><path d="M7 7h20v21H7z" fill="#fff"/><path d="M8 8h18v8h-9v11H8z" fill="#f00" stroke="none"/><path d="M17 17h9v10h-9z" fill="#fff"/></svg></button>
    <button aria-label="Bands"><svg viewBox="0 0 34 34"><path d="M8 7h18v21H8z" fill="#eee" stroke="#222" stroke-width="1.500"/><path d="M8 13h18M8 23h18" stroke="#e24" stroke-width="1.500"/></svg></button>
    <button aria-label="Cloth"><svg viewBox="0 0 34 34"><path d="M7 8c5 5 12-3 20-1-2 6 1 12-1 17-7-3-12 4-18 1z" fill="#fff"/><path d="M7 8c5 5 12-3 20-1" stroke="#c2343b" stroke-width="1.500"/><path d="M7 28V8" stroke="#155"/></svg></button>
    <button aria-label="Wood fold"><svg viewBox="0 0 34 34"><path d="M6 12l7-2 7 3 8-4v15l-7 3-7-5-7 4z" fill="#b9814a" stroke="#593719"/><path d="M13 10v13M20 13v14M6 12l6 3" stroke="#593719"/></svg></button>
    <button aria-label="Pipe"><svg viewBox="0 0 34 34"><path d="M7 18l7-2 8-7 6 3-3 5-5 1-8 7-6-2z" fill="#bbb" stroke="#555"/><path d="M14 16l6 2" stroke="#666"/><circle cx="9" cy="21" r="3" fill="#888" stroke="#555"/></svg></button>
    <button aria-label="Channel"><svg viewBox="0 0 34 34"><path d="M27 7H11L7 19l6 9 3-2-4-7 3-8h12z" fill="#ccc" stroke="#555"/></svg></button>
    <button aria-label="Points"><svg viewBox="0 0 34 34"><path d="M9 28l2-11 7-8 9-3" stroke="#667"/><g fill="#f11" stroke="none"><circle cx="8" cy="27" r="3"/><circle cx="11" cy="17" r="3"/><circle cx="17" cy="10" r="3"/><circle cx="26" cy="6" r="3"/></g></svg></button>
    <button aria-label="Align centre"><svg viewBox="0 0 34 34"><path d="M15 5h4v24h-4zM6 13h7v9H6zM21 13h7v9h-7z" fill="#e56168" stroke="#92262b"/><path d="M6 17h22" stroke="#700"/></svg></button>
    <button aria-label="Distribute"><svg viewBox="0 0 34 34"><path d="M5 15h24v5H5zM12 6h11v6H12zM12 23h11v5H12z" fill="#94df20" stroke="#4a7512"/><path d="M17 6v22" stroke="#4a7512"/></svg></button>
    <button aria-label="Weave"><svg viewBox="0 0 34 34"><path d="M6 12l5-5 4 4-5 5zM19 8l5 4L11 28l-5-4zM24 12l4 3-12 13-4-3zM6 16l4-3 18 12-4 3z" fill="#278de2" stroke="#165c9f"/></svg></button>
    <button aria-label="Drop"><svg viewBox="0 0 34 34"><path d="M6 28c1-6 4-6 7-6h9c3 0 5 3 6 6z" fill="#8de01c" stroke="#557a17"/><path d="M17 5c2 8 5 9 5 14s-10 6-11 0c0-5 4-8 6-14z" fill="#9be9f6" stroke="#356e80"/></svg></button>
    <button aria-label="Drop count"><svg viewBox="0 0 34 34"><path d="M6 28c1-6 4-6 7-6h9l6 6z" fill="#8de01c" stroke="#557a17"/><path d="M18 7c2 8 4 9 4 14s-10 5-10-1z" fill="#9be9f6" stroke="#356e80"/><path d="M9 5v12M13 5v12M5 9h12M5 14h12" stroke-width="1.500"/></svg></button>
  </div>
</div>

<footer class="status">
  <button aria-label="Location"><svg viewBox="0 0 16 16" stroke="#999"><circle cx="8" cy="8" r="7"/><path d="M8 13V8" stroke-width="1.500"/><circle cx="8" cy="6" r="2.500" fill="#777"/></svg></button>
  <button aria-label="Credits"><svg viewBox="0 0 16 16" stroke="#999"><circle cx="8" cy="8" r="7"/><path d="M8 7v6" stroke="#888" stroke-width="3"/><circle cx="8" cy="4.500" r="1" fill="#777"/></svg></button>
  <button aria-label="Account"><svg viewBox="0 0 16 16"><circle cx="8" cy="8" r="7" fill="#fff" stroke="#000" stroke-width="1.500"/><circle cx="8" cy="6" r="3" fill="#000"/><path d="M2 12c3-4 9-4 12 0-3 4-9 4-12 0z" fill="#000"/></svg></button>
  <i></i><output>Select objects. Shift to extend select. Drag mouse to select multiple.</output>
  <i class="push"></i><label for="vcb">Measurements</label><input id="vcb">
  <svg class="grab" viewBox="0 0 12 12"><path d="M10 3v2M6 7v2M10 7v2M2 11v1M6 11v1M10 11v1" stroke="#999" stroke-width="2"/></svg>
</footer>
</body>
</html>
```
FILE: styles.css
```css
* { box-sizing: border-box; }
body {
  margin: 0;
  height: 100vh;
  overflow: hidden;
  display: flex;
  flex-direction: column;
  background: #f9f9f9;
  border-top: 2px solid #7cbfef;
  border-bottom: 5px solid #8dc9fb;
  color: #000;
  font: 12px/18px "Noto Sans", "Open Sans", sans-serif;
}
button, input, select { font: inherit; color: inherit; }
button { padding: 0; border: 0; background: none; flex: none; display: block; }
svg { display: block; fill: none; overflow: hidden; }
svg:not([stroke]) { stroke: #222; }
.defs { position: absolute; width: 0; height: 0; }
a { color: inherit; text-decoration: none; }
h1, h2, p { margin: 0; font-size: 11px; font-weight: normal; }

.menu { display: flex; gap: 12px; padding: 1px 6px; height: 20px; flex: none; }

.strip { display: flex; flex: none; height: 39px; overflow: hidden; border-bottom: 1px solid #a0a0a0; }
.group {
  display: flex;
  align-items: center;
  flex: none;
  padding-left: 11px;
  border-right: 1px solid #a5a5a5;
  background: linear-gradient(#aaa 50%, transparent 50%) 5px 2px / 2px 4px repeat-y;
}
.group.first { padding-left: 9px; background-position: 2px 2px; }
.group.tail { border-right: 0; }
.group button, .palette button, .stack button { width: 34px; height: 34px; }
.group svg, .palette svg, .stack svg { width: 34px; height: 34px; }
.top .group button.on, .palette button.on { background: #b5d4f2; border: 1px solid #5fa8e8; }
.on svg { margin: -1px; }
.sep { width: 7px; height: 30px; flex: none; background: linear-gradient(#999, #999) 2px 0 / 1px 100% no-repeat; }
.gold { --tone: #f5ad12; }
.ice { --tone: #ccd8e8; }
.sage { --tone: #c5cfae; }
.tone { fill: var(--tone); }
.azure svg { fill: #2194ee; stroke: #0b548c; }
.mustard svg { fill: #dcb425; stroke: #71580c; }
.lime svg { fill: #9be33b; stroke: #527b18; }
.crimson svg { fill: #e43e4d; stroke: #861923; }
.chalk svg { fill: #f5f5f5; stroke: #888; }
.shade { fill: none; }

.work { display: flex; flex: 1; min-height: 0; }
.dots { height: 2px; flex: none; margin: 0 0 1px 2px; background: linear-gradient(90deg, #bbb 50%, transparent 50%) 0 0 / 4px 2px repeat-x; }
.left { width: 70px; flex: none; display: flex; flex-direction: column; padding-top: 3px; }
.palette { flex: 1; min-height: 0; overflow: hidden; margin-top: 3px; border-bottom: 1px solid #aaa; }
.pair { display: grid; grid-template-columns: 34px 34px; }
.rule { display: block; height: 8px; margin: 0 4px 0 2px; background: linear-gradient(#999, #999) 0 2px / 100% 1px no-repeat; }
.red svg { stroke: #e82a31; }
.red circle { fill: #f11; }
.red .grey { fill: #8d8d87; stroke: #444; }
.red .ring { fill: none; }
.red .thin { stroke: #f88; }
.red .lens { fill: #82b6e7; stroke: #37526d; stroke-width: 1.5; }
.palette text { font: 10px "Liberation Serif", serif; fill: #222; stroke: none; }
.plugin { width: 36px; height: 40px; padding-top: 4px; border: 1px solid #aaa; border-width: 0 1px 1px 0; }
.script { width: 30px; height: 30px; margin-left: 2px; color: #1a2a99; font: italic bold 23px/28px "Liberation Serif", serif; }
.pink { border-bottom: 1px solid #e815c8; }
.green { border-bottom: 2px solid #17a04a; font-size: 20px; }

.view { flex: 1; min-width: 0; border-left: 2px solid #777; border-top: 1px solid #666; background: #f9f9f9; }
.view svg { width: 100%; height: 100%; }

.tray { width: 259px; flex: none; padding-left: 4px; display: flex; flex-direction: column; font-size: 11px; line-height: 16px; }
.tray h1 { display: flex; align-items: center; height: 17px; padding: 0 4px; background: #cbdbe9; }
.pin { margin-left: auto; width: 10px; height: 10px; }
.shut { width: 12px; height: 12px; margin-left: 8px; background: #c75050; color: #fff; font: bold 11px/11px "Noto Sans", sans-serif; }
.traybody { flex: 1; min-height: 0; display: flex; }
.panels { flex: 1; display: flex; flex-direction: column; overflow: hidden; padding-top: 3px; }
.scroll { width: 17px; display: flex; flex-direction: column; align-items: center; padding: 6px 0 3px; }
.scroll svg { width: 12px; height: 12px; }
.scroll i { width: 15px; height: 17px; margin: auto 0 162px; background: #cdcdcd; }
.tray h2 {
  display: flex; align-items: center; height: 17px; padding: 0 2px 0 7px;
  border: 1px solid #aaa; font-size: 12px;
  background: linear-gradient(#f9f9f9 35%, #d6d6d6 35% 70%, #aaa 70%);
}
.tri { border: 4px solid transparent; border-top: 7px solid #000; border-bottom: 0; margin-right: 6px; }
.tray h2 button { margin-left: auto; width: 13px; height: 13px; border: 1px solid #999; background: #fff; font: bold 10px/10px "Noto Sans", sans-serif; }

.materials { height: 429px; flex: none; }
.info { display: flex; height: 76px; padding: 2px 2px 0; border-bottom: 1px solid #aaa; }
.preview { width: 66px; height: 71px; border: 1px solid #aaa; position: relative; }
.corner { position: absolute; right: 2px; bottom: 2px; width: 10px; height: 10px; }
.name { width: 137px; height: 18px; margin-left: 3px; padding: 0 3px; border: solid #777; border-width: 1px 0 0 2px; background: none; }
.tools { display: flex; flex-direction: column; align-items: center; gap: 4px; margin-left: auto; }
.tools button:first-child svg { width: 12px; height: 16px; margin-top: 2px; }
.tools svg { width: 20px; height: 20px; }
.tools .wedge { width: 22px; height: 22px; margin-top: 2px; }
.tabs { display: flex; align-items: center; height: 29px; padding: 2px 4px 0 6px; }
.tabs a { padding-right: 15px; margin-right: 3px; border-right: 1px solid #666; line-height: 18px; }
.tabs .active { padding-right: 8px; }
.tabs button { margin-left: auto; }
.tabs svg { width: 18px; height: 18px; }
.pick { display: flex; align-items: center; gap: 7px; height: 29px; padding: 0 4px 0 7px; border-bottom: 1px solid #aaa; }
.pick svg { width: 16px; height: 16px; }
.drop { position: relative; display: block; }
.drop select { width: 100%; height: 100%; padding: 0 2px; border: solid #777; border-width: 2px 1px 1px 2px; border-radius: 0; background: #f9f9f9; appearance: none; }
.drop::after { content: ""; position: absolute; right: 5px; top: 9px; border: 4px solid transparent; border-top-color: #000; pointer-events: none; }
.pick .drop { flex: 1; height: 22px; }
.swatches { display: grid; grid-template-columns: repeat(3, 66px); gap: 1px 2px; padding: 2px 3px; }
.swatches button { position: relative; height: 66px; border: 1px solid #aaa; outline: 1px solid #fff; outline-offset: -2px; }
.coal { background: #333; }
.blue { background: #2196f3; }
.rouge { background: #ea473b; }
.swatches .blank { border-color: #2f9be8; outline: 0; box-shadow: 0 0 0 1px #2f9be8; }

.shadows { flex: 1; min-height: 0; overflow: hidden; border-top: 2px solid #777; padding-top: 1px; }
.zone { display: flex; align-items: center; height: 32px; padding: 0 6px 0 7px; }
.zone svg { width: 22px; height: 22px; }
.zone .fold { margin-left: auto; }
.zone .fold svg { width: 12px; height: 16px; }
.zone .drop { width: 108px; height: 20px; margin-left: 16px; }
.row { display: grid; grid-template-columns: 44px 105px 84px; height: 29px; align-items: center; padding-left: 2px; }
.row > label { height: 22px; }
.slide { height: 22px; min-width: 0; }
.slide input { display: block; appearance: none; width: 104px; height: 13px; margin: 0; border: solid #999; border-width: 1px 0 0 1px; background: none; }
.slide input::-webkit-slider-runnable-track { height: 12px; background: var(--ramp) 0 0 / 100% 5px no-repeat; }
.slide input::-webkit-slider-thumb { appearance: none; width: 5px; height: 12px; background: #f9f9f9; border: solid #888; border-width: 0 1px 1px 0; }
.hours { --ramp: linear-gradient(90deg, #f9f9f9 9%, #d4e8ef 9% 15%, #b9d6ec 15% 29%, #89aacd 29% 46%, #7897e4 46% 58%, #5a68ea 58% 77%, #3c4cad 77% 83%, #283078 83% 91%, #0c0d38 91%); }
.months { --ramp: linear-gradient(90deg, #f9f9f9 4%, #eee5c0 4% 10%, #f3eb9b 10% 17%, #edc964 17% 28%, #f3bf12 28% 40%, #ec8415 40% 53%, #f44b17 53% 64%, #f20b10 64% 78%, #f88 78% 90%, #e8c0c0 90%); }
.greys { --ramp: linear-gradient(90deg, #000 12%, #303030 12% 26%, #505050 26% 38%, #696969 38% 51%, #8d8d8d 51% 65%, #aaa 65% 77%, #cdcdcd 77% 88%, transparent 88%); }
.scale { display: flex; justify-content: space-between; width: 107px; font: 10px/10px "Liberation Sans", sans-serif; white-space: nowrap; }
.hours + .scale { font-size: 9px; }
.months + .scale { padding-left: 2px; }
.spin { display: flex; border: solid #777; border-width: 2px 0 0 2px; }
.spin input { flex: 1; width: 20px; min-width: 0; border: 0; padding: 0 2px; background: none; }
.spin > span { width: 16px; }
.spin button { width: 16px; height: 9px; font: 6px/7px "DejaVu Sans", sans-serif; border: solid #999; border-width: 0 1px 1px 0; }
.row > .spin, .row > .drop { width: 69px; height: 20px; margin-left: 15px; }
.block { border: solid #aaa; border-width: 1px 0; padding: 5px 0; margin-top: 2px; }
.check { display: flex; align-items: center; gap: 5px; height: 18px; padding-left: 64px; }
.check input { appearance: none; width: 11px; height: 11px; margin: 0; border: solid #777; border-width: 2px 0 0 2px; font: 10px/9px "DejaVu Sans", sans-serif; }
.check input:checked::after { content: "✓"; color: #888; }
.check:has(:disabled) { color: #999; }
.check.sun { height: 31px; border-bottom: 1px solid #aaa; }
.shadows p { padding: 5px 2px 0; height: 21px; }

.right { width: 35px; flex: none; padding-top: 3px; overflow: hidden; }
.stack { padding: 4px 0 0 2px; }
.mono { padding-top: 2px; }
.tall { padding-bottom: 2px; }
.wide { display: block; height: 5px; border-top: 1px solid #aaa; }
.mono svg { stroke: #4d4d4d; stroke-width: 2; }
.mono .pale { stroke: #aaa; }
.mono .soft svg { stroke: #aaa; }

.bottom { height: 38px; }
.status { display: flex; align-items: center; height: 27px; flex: none; padding: 0 4px 0 3px; }
.status button { margin-right: 14px; }
.status button svg { width: 16px; height: 16px; }
.status button + i { margin-left: -3px; }
.status i { width: 1px; height: 8px; background: #777; margin-right: 10px; }
.status .push { margin-left: auto; }
.status input { width: 200px; height: 24px; margin-left: 9px; border: 1px solid #aab4d5; background: #f9f9f9; }
.grab { width: 12px; height: 12px; margin: 8px 0 0 4px; }
```
